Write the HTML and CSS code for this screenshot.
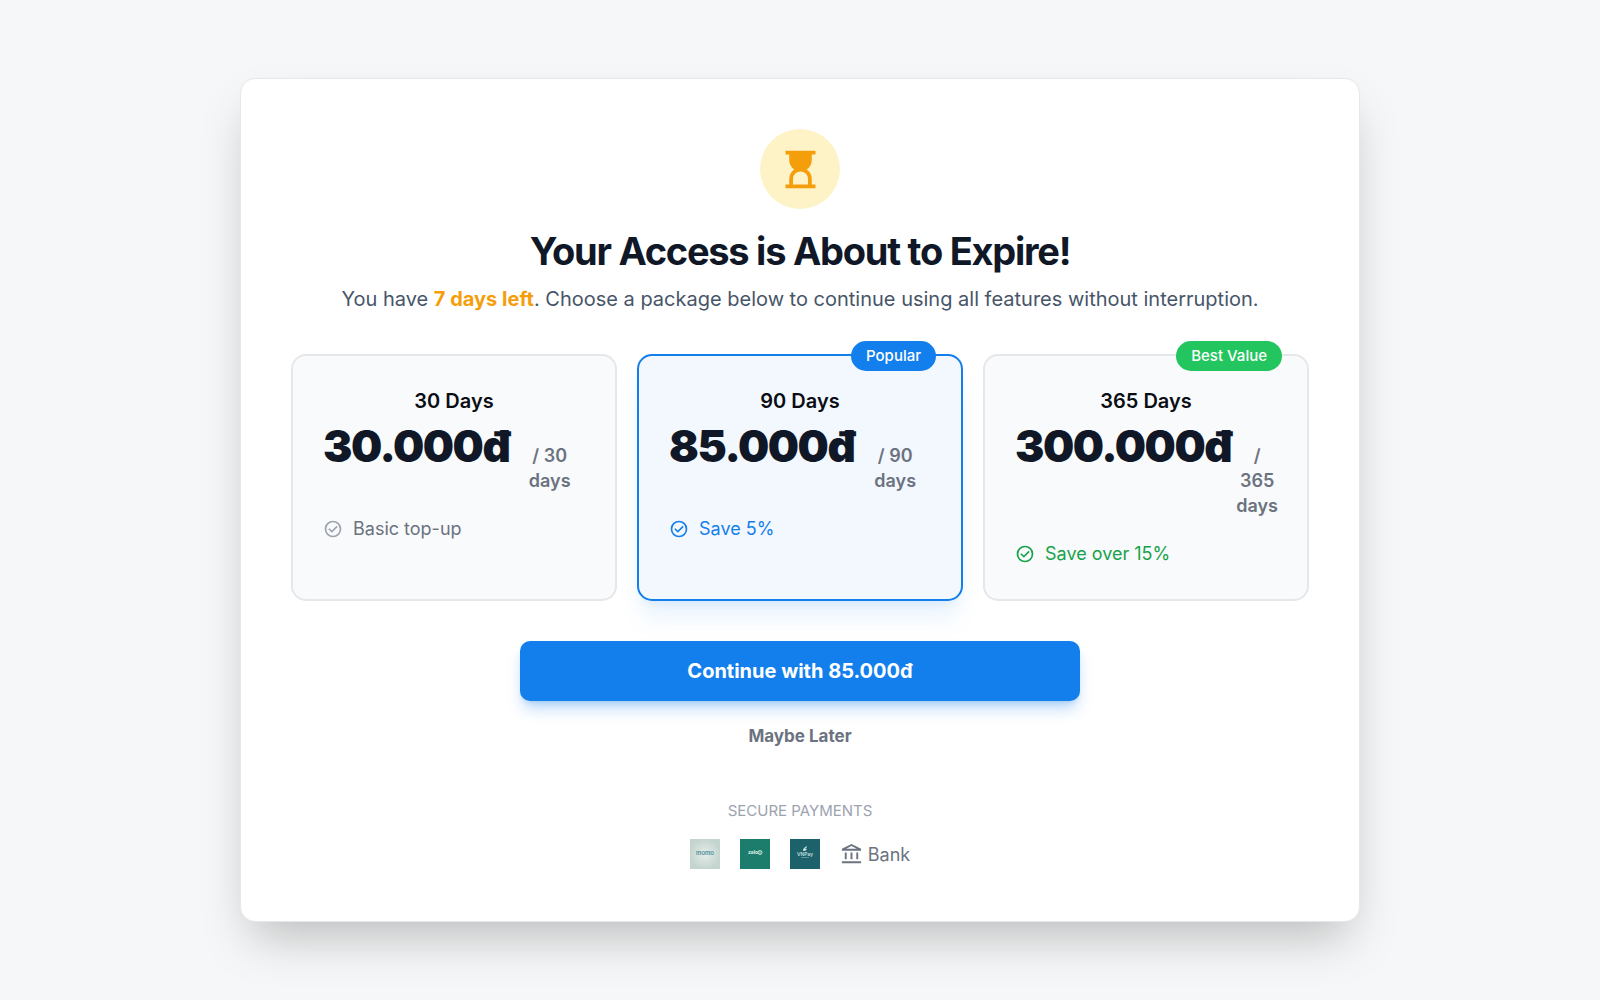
FILE: index.html
```html
<!DOCTYPE html>
<html lang="en">
<head>
<meta charset="utf-8">
<meta name="viewport" content="width=device-width, initial-scale=1">
<title>Your Access is About to Expire!</title>
<link rel="stylesheet" href="styles.css">
</head>
<body>
<svg class="sprite" aria-hidden="true">
  <symbol id="check" viewBox="0 0 24 24">
    <circle cx="12" cy="12" r="9" fill="none" stroke="currentColor" stroke-width="2"/>
    <path fill="currentColor" d="m10.6 16.6 7.05-7.05-1.4-1.4-5.65 5.65-2.85-2.85-1.4 1.4z"/>
  </symbol>
</svg>
<main class="dialog">
  <header class="intro">
    <span class="intro-icon">
      <svg class="hourglass" viewBox="0 0 24 24" aria-hidden="true"><path fill="currentColor" d="M8 20h8v-3q0-1.650-1.175-2.825T12 13q-1.650 0-2.825 1.175T8 17zm-4 2v-2h2v-3q0-1.525.713-2.863T8.700 12q-1.275-.8-1.987-2.137T6 7V4H4V2h16v2h-2v3q0 1.525-.712 2.863T15.300 12q1.275.8 1.988 2.138T18 17v3h2v2z"/></svg>
    </span>
    <h1 class="title">Your Access is About to Expire!</h1>
    <p class="subtitle">You have <strong class="days-left">7 days left</strong>. Choose a package below to continue using all features without interruption.</p>
  </header>

  <section class="plans" aria-label="Packages">
    <button class="plan" type="button" aria-pressed="false">
      <span class="plan-head">
        <span class="plan-name">30 Days</span>
        <span class="plan-cost"><span class="price">30.000đ</span><span class="period">/ 30 days</span></span>
      </span>
      <span class="perk"><svg class="perk-icon perk-icon-muted" aria-hidden="true"><use href="#check"/></svg>Basic top-up</span>
    </button>
    <button class="plan plan-selected" type="button" aria-pressed="true">
      <span class="badge">Popular</span>
      <span class="plan-head">
        <span class="plan-name">90 Days</span>
        <span class="plan-cost"><span class="price">85.000đ</span><span class="period">/ 90 days</span></span>
      </span>
      <span class="perk perk-blue"><svg class="perk-icon" aria-hidden="true"><use href="#check"/></svg>Save 5%</span>
    </button>
    <button class="plan" type="button" aria-pressed="false">
      <span class="badge badge-green">Best Value</span>
      <span class="plan-head">
        <span class="plan-name">365 Days</span>
        <span class="plan-cost"><span class="price">300.000đ</span><span class="period">/ 365 days</span></span>
      </span>
      <span class="perk perk-green"><svg class="perk-icon" aria-hidden="true"><use href="#check"/></svg>Save over 15%</span>
    </button>
  </section>

  <div class="actions">
    <button class="continue" type="button">Continue with 85.000đ</button>
    <button class="later" type="button">Maybe Later</button>
  </div>

  <footer class="payments">
    <p class="payments-label">SECURE PAYMENTS</p>
    <div class="methods">
      <svg class="logo" viewBox="0 0 30 30" role="img" aria-label="Momo">
        <defs><radialGradient id="mist"><stop offset="0" stop-color="#e6ece8"/><stop offset="1" stop-color="#c4d5d0"/></radialGradient></defs>
        <rect width="30" height="30" fill="url(#mist)"/>
        <text class="logo-text logo-medium" x="15" y="16" font-size="6" fill="#2c7f8b">momo</text>
      </svg>
      <svg class="logo" viewBox="0 0 30 30" role="img" aria-label="ZaloPay">
        <rect width="30" height="30" fill="#1c7d6c"/>
        <text class="logo-text logo-bold" x="13" y="15" font-size="5" fill="#e4f3ee">zalo</text>
        <circle cx="20" cy="13.500" r="2" fill="#5fa897" stroke="#b9ddd2"/>
      </svg>
      <svg class="logo" viewBox="0 0 30 30" role="img" aria-label="VNPay">
        <rect width="30" height="30" fill="#1d626b"/>
        <path d="M13 11.500q0-2.500 4-4.500-.3 2-2 3 1.500.2 2-.5-.5 2.500-4 2.500" fill="#d5e8e8"/>
        <text class="logo-text logo-medium" x="15" y="16.500" font-size="5" fill="#d5e8e8">VNPay</text>
        <path d="M11 18.500h8" stroke="#7fa9ae" stroke-width=".7"/>
      </svg>
      <span class="bank">
        <svg class="bank-icon" viewBox="0 0 24 24" aria-hidden="true"><path fill="currentColor" d="M5 17v-7h2v7zm6 0v-7h2v7zm-9 4v-2h20v2zm15-4v-7h2v7zM2 8V6l10-5 10 5v2zm4.475-2h11.050L12 3.250z"/></svg>
        Bank
      </span>
    </div>
  </footer>
</main>
</body>
</html>
```
FILE: styles.css
```css
*, *::before, *::after { box-sizing: border-box; }

body {
  margin: 0;
  min-height: 100vh;
  padding: 20px;
  display: flex;
  align-items: center;
  justify-content: center;
  background: #f6f7f8;
  color: #101828;
  font: 20px/30px Inter, "Liberation Sans", sans-serif;
}

h1, p { margin: 0; }

button {
  font: inherit;
  color: inherit;
  border: 0;
  background: none;
  cursor: pointer;
}

.sprite {
  position: absolute;
  width: 0;
  height: 0;
}

.dialog {
  width: 100%;
  max-width: 1120px;
  padding: 50px;
  display: flex;
  flex-direction: column;
  gap: 40px;
  background: #fff;
  border: 1px solid #e5e7eb;
  border-radius: 15px;
  box-shadow: 0 25px 50px -12px rgb(0 0 0 / 25%);
}

.intro {
  display: flex;
  flex-direction: column;
  align-items: center;
  gap: 10px;
  text-align: center;
}

.intro-icon {
  width: 80px;
  height: 80px;
  margin-bottom: 10px;
  display: grid;
  place-items: center;
  border-radius: 50%;
  background: #fef3c7;
  color: #f59e0b;
}

.hourglass {
  width: 45px;
  height: 45px;
}

.title {
  font-size: 38px;
  line-height: 45px;
  font-weight: 700;
  letter-spacing: -0.033em;
}

.subtitle { color: #475569; }

.days-left {
  font-weight: 700;
  color: #f59e0b;
}

.plans {
  display: grid;
  grid-template-columns: repeat(3, minmax(0, 1fr));
  gap: 20px;
}

.plan {
  position: relative;
  padding: 30px 30px 33px;
  display: flex;
  flex-direction: column;
  gap: 23px;
  border: 2px solid #e5e7eb;
  border-radius: 15px;
  background: #f9fafb;
}

.plan-selected {
  border-color: #137fec;
  background: #f3f8fe;
  box-shadow: 0 20px 25px -5px rgb(19 127 236 / 10%), 0 8px 10px -6px rgb(19 127 236 / 10%);
}

.plan-head {
  display: flex;
  flex-direction: column;
  gap: 5px;
}

.plan-name {
  font-weight: 600;
  color: #0b0d14;
}

.plan-cost {
  display: flex;
  align-items: baseline;
  gap: 5px;
}

.price {
  font-size: 44px;
  line-height: 50px;
  font-weight: 900;
  letter-spacing: -0.033em;
}

.period {
  flex: 1;
  font-size: 18px;
  line-height: 25px;
  font-weight: 600;
  color: #6b7280;
}

.perk {
  display: flex;
  align-items: center;
  gap: 10px;
  font-size: 18px;
  line-height: 25px;
  color: #6b7280;
}

.perk-icon {
  width: 20px;
  height: 20px;
}

.perk-icon-muted { color: #9ca3af; }
.perk-blue { color: #137fec; }
.perk-green { color: #16a34a; }

.badge {
  position: absolute;
  top: -15px;
  right: 25px;
  padding: 5px 15px;
  border-radius: 15px;
  background: #137fec;
  color: #fff;
  font-size: 15px;
  line-height: 20px;
  font-weight: 500;
}

.badge-green { background: #22c55e; }

.actions {
  display: flex;
  flex-direction: column;
  align-items: center;
  gap: 20px;
}

.continue {
  width: 100%;
  max-width: 560px;
  padding: 15px 20px;
  border-radius: 10px;
  background: #137fec;
  color: #fff;
  font-weight: 700;
  box-shadow: 0 10px 15px -3px rgb(19 127 236 / 30%), 0 4px 6px -4px rgb(19 127 236 / 30%);
}

.later {
  padding: 0;
  font-size: 17px;
  font-weight: 700;
  color: #6b7280;
}

.payments {
  padding: 10px 0 2px;
  display: flex;
  flex-direction: column;
  align-items: center;
  gap: 18px;
}

.payments-label {
  font-size: 15px;
  line-height: 20px;
  color: #9ca3af;
}

.methods {
  display: flex;
  align-items: center;
  gap: 20px;
}

.logo {
  width: 30px;
  height: 30px;
}

.logo-text { text-anchor: middle; }
.logo-medium { font-weight: 500; }
.logo-bold { font-weight: 700; }

.bank {
  display: flex;
  align-items: center;
  gap: 5px;
  font-size: 18px;
  line-height: 25px;
  color: #6b7280;
}

.bank-icon {
  width: 23px;
  height: 23px;
}
```
